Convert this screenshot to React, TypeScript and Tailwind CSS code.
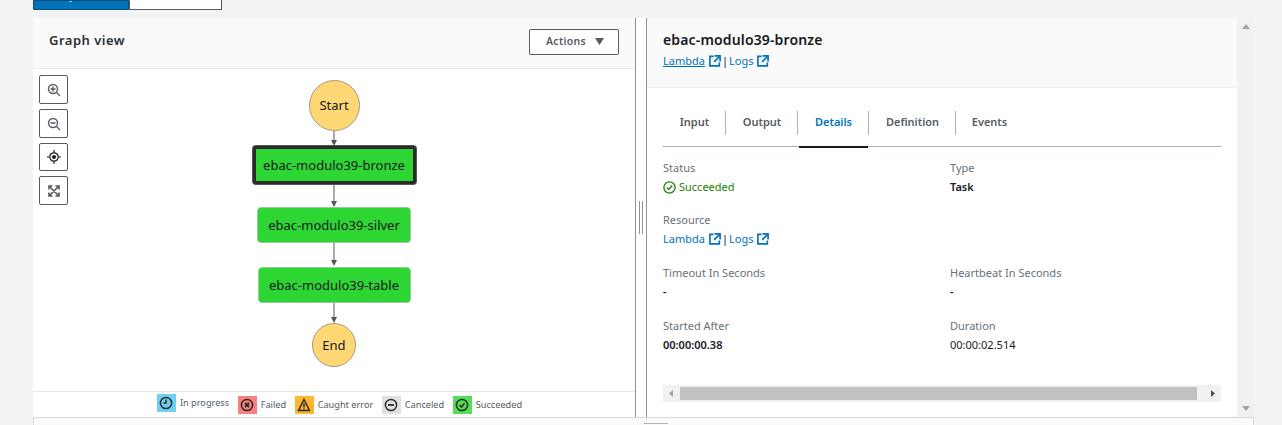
const FONT = "font-['Noto_Sans',sans-serif]";

function ExternalIcon() {
  return (
    <svg width="12" height="12" viewBox="0 0 13 13" fill="none" stroke="#0073bb" strokeWidth="1.8" className="shrink-0">
      <path d="M5 1.5H1v10.2h10.2V8" />
      <path d="M6 1h6v6" />
      <path d="M11.6 1.4 5.5 7.5" />
    </svg>
  );
}

function ResourceLinks({ underline }: { underline?: boolean }) {
  return (
    <div className="flex items-center text-[11px] leading-[16px] text-[#0073bb]">
      <span className={`flex items-center gap-[4px] ${underline ? "underline" : ""}`}>
        Lambda <ExternalIcon />
      </span>
      <span className="mx-[1px] text-[#16191f]">|</span>
      <span className="flex items-center gap-[4px]">
        Logs <ExternalIcon />
      </span>
    </div>
  );
}

function ToolButton({ children, short }: { children: React.ReactNode; short?: boolean }) {
  return (
    <div className={`flex ${short ? "h-[28px]" : "h-[29px]"} w-[29px] items-center justify-center rounded-[2px] border border-[#545b64] bg-white`}>
      {children}
    </div>
  );
}

function Arrow({ height }: { height: number }) {
  return (
    <svg width="10" height={height} viewBox={`0 0 10 ${height}`} className="block shrink-0">
      <line x1="5" y1="0" x2="5" y2={height - 5} stroke="#888" strokeWidth="1.4" />
      <path d={`M2 ${height - 6}h6l-3 6z`} fill="#555" />
    </svg>
  );
}

function GraphNode({ label, width, selected }: { label: string; width: number; selected?: boolean }) {
  return (
    <div
      style={{ width }}
      className={
        selected
          ? "mb-px flex h-[38px] items-center justify-center rounded-[3px] border-[3px] border-[#2b2b2b] bg-[#2dd632] pt-px text-[13px] text-[#16191f] shadow-[0_0_0_1px_#555]"
          : "flex h-[36px] items-center justify-center rounded-[4px] border border-[#9ac99c] bg-[#2dd632] pt-px text-[13px] text-[#16191f]"
      }
    >
      {label}
    </div>
  );
}

function Terminal({ label, size }: { label: string; size: number }) {
  return (
    <div
      style={{ width: size, height: size }}
      className="flex items-center justify-center rounded-full border border-[#a89a78] bg-[#ffd875] pt-px text-[13px] text-[#16191f]"
    >
      {label}
    </div>
  );
}

function LegendItem({ color, label, children, raised }: { color: string; label: string; children: React.ReactNode; raised?: boolean }) {
  return (
    <div className={`flex items-center gap-[4px] ${raised ? "-translate-y-[2px]" : ""}`}>
      <div style={{ background: color }} className="flex h-[18px] w-[19px] items-center justify-center">
        <svg width="14" height="14" viewBox="0 0 14 14" fill="none" stroke="#2b2b2b" strokeWidth="1.5">
          {children}
        </svg>
      </div>
      <span className="text-[9.2px] text-[#545b64]">{label}</span>
    </div>
  );
}

function Field({ label, value, bold }: { label: string; value: string; bold?: boolean }) {
  return (
    <div>
      <div className="text-[11px] leading-[16px] text-[#687078]">{label}</div>
      <div className={`mt-[3px] text-[11px] leading-[16px] text-[#16191f] ${bold ? "font-semibold" : ""}`}>{value}</div>
    </div>
  );
}

export default function App() {
  const tabs = ["Input", "Output", "Details", "Definition", "Events"];
  const tabWidths = [63, 72, 71, 87, 66];

  return (
    <div className={`flex h-[425px] w-[1282px] flex-col overflow-hidden bg-[#f2f3f3] pl-[33px] ${FONT}`}>
      <div className="flex h-[10px] shrink-0">
        <div className="flex w-[96px] justify-center overflow-hidden rounded-bl-[1px] border border-[#0a4a74] bg-[#0073bb]">
          <span className="-mt-[14px] text-[12px] font-semibold leading-[16px] text-white">Graph view</span>
        </div>
        <div className="flex w-[93px] justify-center overflow-hidden border border-t-0 border-[#545b64] bg-white">
          <span className="-mt-[14px] text-[12px] font-semibold leading-[16px] text-[#545b64]">Table view</span>
        </div>
      </div>

      <div className="mt-[8px] flex h-[399px] w-[1221px] shrink-0">
        {/* graph panel */}
        <div className="flex w-[603px] shrink-0 flex-col border-r border-[#879596] bg-white">
          <div className="flex h-[51px] shrink-0 items-center justify-between border-b border-[#eaeded] bg-[#fafafa] pl-[16px] pr-[16px] pb-[5px]">
            <h2 className="text-[13px] font-semibold tracking-[0.5px] text-[#2b3038]">Graph view</h2>
            <div className="mt-[2px] flex h-[26px] w-[90px] items-center justify-center gap-[9px] rounded-[2px] border border-[#545b64] bg-white pl-[2px] text-[10.5px] font-semibold tracking-[0.3px] text-[#545b64]">
              Actions
              <svg width="9" height="7" viewBox="0 0 9 7">
                <path d="M0 0h9L4.5 7z" fill="#545b64" />
              </svg>
            </div>
          </div>

          <div className="flex min-h-0 flex-1 pl-[6px] pt-[6px]">
            <div className="flex w-[29px] shrink-0 flex-col gap-[5px]">
              <ToolButton>
                <svg width="14" height="14" viewBox="0 0 14 14" fill="none" stroke="#545b64" strokeWidth="1.4">
                  <circle cx="6" cy="6" r="4.5" />
                  <path d="M9.5 9.5 13 13M6 3.5v5M3.5 6h5" />
                </svg>
              </ToolButton>
              <ToolButton>
                <svg width="14" height="14" viewBox="0 0 14 14" fill="none" stroke="#545b64" strokeWidth="1.4">
                  <circle cx="6" cy="6" r="4.5" />
                  <path d="M9.5 9.5 13 13M3.5 6h5" />
                </svg>
              </ToolButton>
              <ToolButton short>
                <svg width="14" height="14" viewBox="0 0 14 14" fill="none" stroke="#16191f" strokeWidth="1.2">
                  <circle cx="7" cy="7" r="4.2" />
                  <circle cx="7" cy="7" r="2" fill="#16191f" stroke="none" />
                  <path d="M7 0v2.5M7 11.5V14M0 7h2.5M11.5 7H14" />
                </svg>
              </ToolButton>
              <ToolButton>
                <svg width="12" height="12" viewBox="0 0 12 12" fill="none" stroke="#545b64" strokeWidth="1.6">
                  <path d="M1 4.5V1h3.5M11 4.5V1H7.5M1 7.5V11h3.5M11 7.5V11H7.5M1.5 1.5l9 9M10.5 1.5l-9 9" />
                </svg>
              </ToolButton>
            </div>

            <div className="ml-[186px] flex w-[160px] flex-col items-center pt-[5px] text-[13px]">
              <Terminal label="Start" size={51} />
              <Arrow height={15} />
              <GraphNode label="ebac-modulo39-bronze" width={163} selected />
              <Arrow height={22} />
              <GraphNode label="ebac-modulo39-silver" width={154} />
              <Arrow height={23} />
              <div className="mt-px">
                <GraphNode label="ebac-modulo39-table" width={153} />
              </div>
              <Arrow height={20} />
              <Terminal label="End" size={44} />
            </div>
          </div>

          <div className="flex h-[26px] shrink-0 items-center justify-center gap-[8.5px] border-t border-[#e4e7e7] bg-white pl-[11px]">
            <LegendItem color="#6dd0f0" label="In progress" raised>
              <circle cx="7" cy="7" r="5.6" />
              <path d="M7 3.5V7H4.5" />
            </LegendItem>
            <LegendItem color="#f88083" label="Failed">
              <circle cx="7" cy="7" r="5.6" />
              <path d="m5 5 4 4M9 5 5 9" strokeWidth="1.8" />
            </LegendItem>
            <LegendItem color="#ffb52e" label="Caught error">
              <path d="M7 1.5 12.5 12.5h-11z" />
              <path d="M7 5.5v4M7 10.5v1" />
            </LegendItem>
            <LegendItem color="#e0e0e0" label="Canceled">
              <circle cx="7" cy="7" r="5.6" />
              <path d="M4 7h6" strokeWidth="1.8" />
            </LegendItem>
            <LegendItem color="#55dc58" label="Succeeded">
              <circle cx="7" cy="7" r="5.6" />
              <path d="m4.5 7 2 2 3-3.8" />
            </LegendItem>
          </div>
        </div>

        {/* resize handle */}
        <div className="flex w-[11px] shrink-0 items-center justify-center border-r border-[#879596] bg-white pb-[1px]">
          <div className="h-[33px] w-[4px] border-x border-[#879596]" />
        </div>

        {/* details panel */}
        <div className="flex w-[590px] shrink-0 flex-col bg-white">
          <div className="h-[70px] shrink-0 border-b border-[#eaeded] bg-[#fafafa] pl-[16px] pt-[13px]">
            <h2 className="mb-[4px] text-[14px] font-semibold leading-[18px] tracking-[0.15px] text-[#16191f]">ebac-modulo39-bronze</h2>
            <ResourceLinks underline />
          </div>

          <div className="mx-[16px] mt-[23px] flex h-[36px] w-[558px] shrink-0 border-b border-[#a0b0b4]">
            {tabs.map((tab, index) => (
              <div key={tab} style={{ width: tabWidths[index] }} className="relative h-[36px] shrink-0">
                <div
                  className={`flex h-[24px] items-center justify-center pb-px pl-[1px] text-[11px] font-semibold ${
                    index < tabs.length - 1 ? "border-r border-[#aab7b8]" : ""
                  } ${tab === "Details" ? "text-[#0073bb]" : "text-[#545b64]"}`}
                >
                  {tab}
                </div>
                {tab === "Details" && <div className="absolute -bottom-px left-[1px] h-[2px] w-[69px] bg-[#16191f]" />}
              </div>
            ))}
          </div>

          <div className="ml-[16px] mt-[13px] grid w-[574px] grid-cols-[287px_287px] grid-rows-[34px_35px_35px_35px] gap-y-[18px]">
            <div>
              <div className="text-[11px] leading-[16px] text-[#687078]">Status</div>
              <div className="mt-[3px] flex items-center gap-[3px] text-[11px] leading-[16px] text-[#1d8102]">
                <svg width="13" height="13" viewBox="0 0 13 13" fill="none" stroke="#1d8102" strokeWidth="1.3">
                  <circle cx="6.5" cy="6.5" r="5.6" />
                  <path d="m3.8 6.5 2 2 3.4-4" />
                </svg>
                Succeeded
              </div>
            </div>
            <Field label="Type" value="Task" bold />
            <div>
              <div className="text-[11px] leading-[16px] text-[#687078]">Resource</div>
              <div className="mt-[3px]">
                <ResourceLinks />
              </div>
            </div>
            <div />
            <Field label="Timeout In Seconds" value="-" bold />
            <Field label="Heartbeat In Seconds" value="-" bold />
            <Field label="Started After" value="00:00:00.38" bold />
            <Field label="Duration" value="00:00:02.514" />
          </div>

          <div className="ml-[16px] mt-[32px] flex h-[17px] w-[558px] shrink-0 items-center bg-[#f1f1f1]">
            <svg width="17" height="17" viewBox="0 0 17 17" className="shrink-0">
              <path d="M10 5v7L6 8.5z" fill="#a3a3a3" />
            </svg>
            <div className="h-[13px] w-[517px] bg-[#c1c1c1]" />
            <svg width="24" height="17" viewBox="0 0 24 17" className="shrink-0">
              <path d="M14 5v7l4-3.5z" fill="#505050" />
            </svg>
          </div>
        </div>

        {/* page scrollbar */}
        <div className="flex w-[17px] shrink-0 flex-col items-center justify-between bg-[#f1f1f1] py-[6px]">
          <svg width="8" height="5" viewBox="0 0 8 5">
            <path d="M0 5h8L4 0z" fill="#a3a3a3" />
          </svg>
          <svg width="8" height="5" viewBox="0 0 8 5">
            <path d="M0 0h8L4 5z" fill="#a3a3a3" />
          </svg>
        </div>
      </div>

      <div className="relative h-[8px] w-[1221px] shrink-0 border-l border-t border-r border-[#d5dbdb] bg-[#fafafa]">
        <div className="absolute left-[610px] top-[5px] h-px w-[24px] bg-[#aab7b8]" />
      </div>
    </div>
  );
}
